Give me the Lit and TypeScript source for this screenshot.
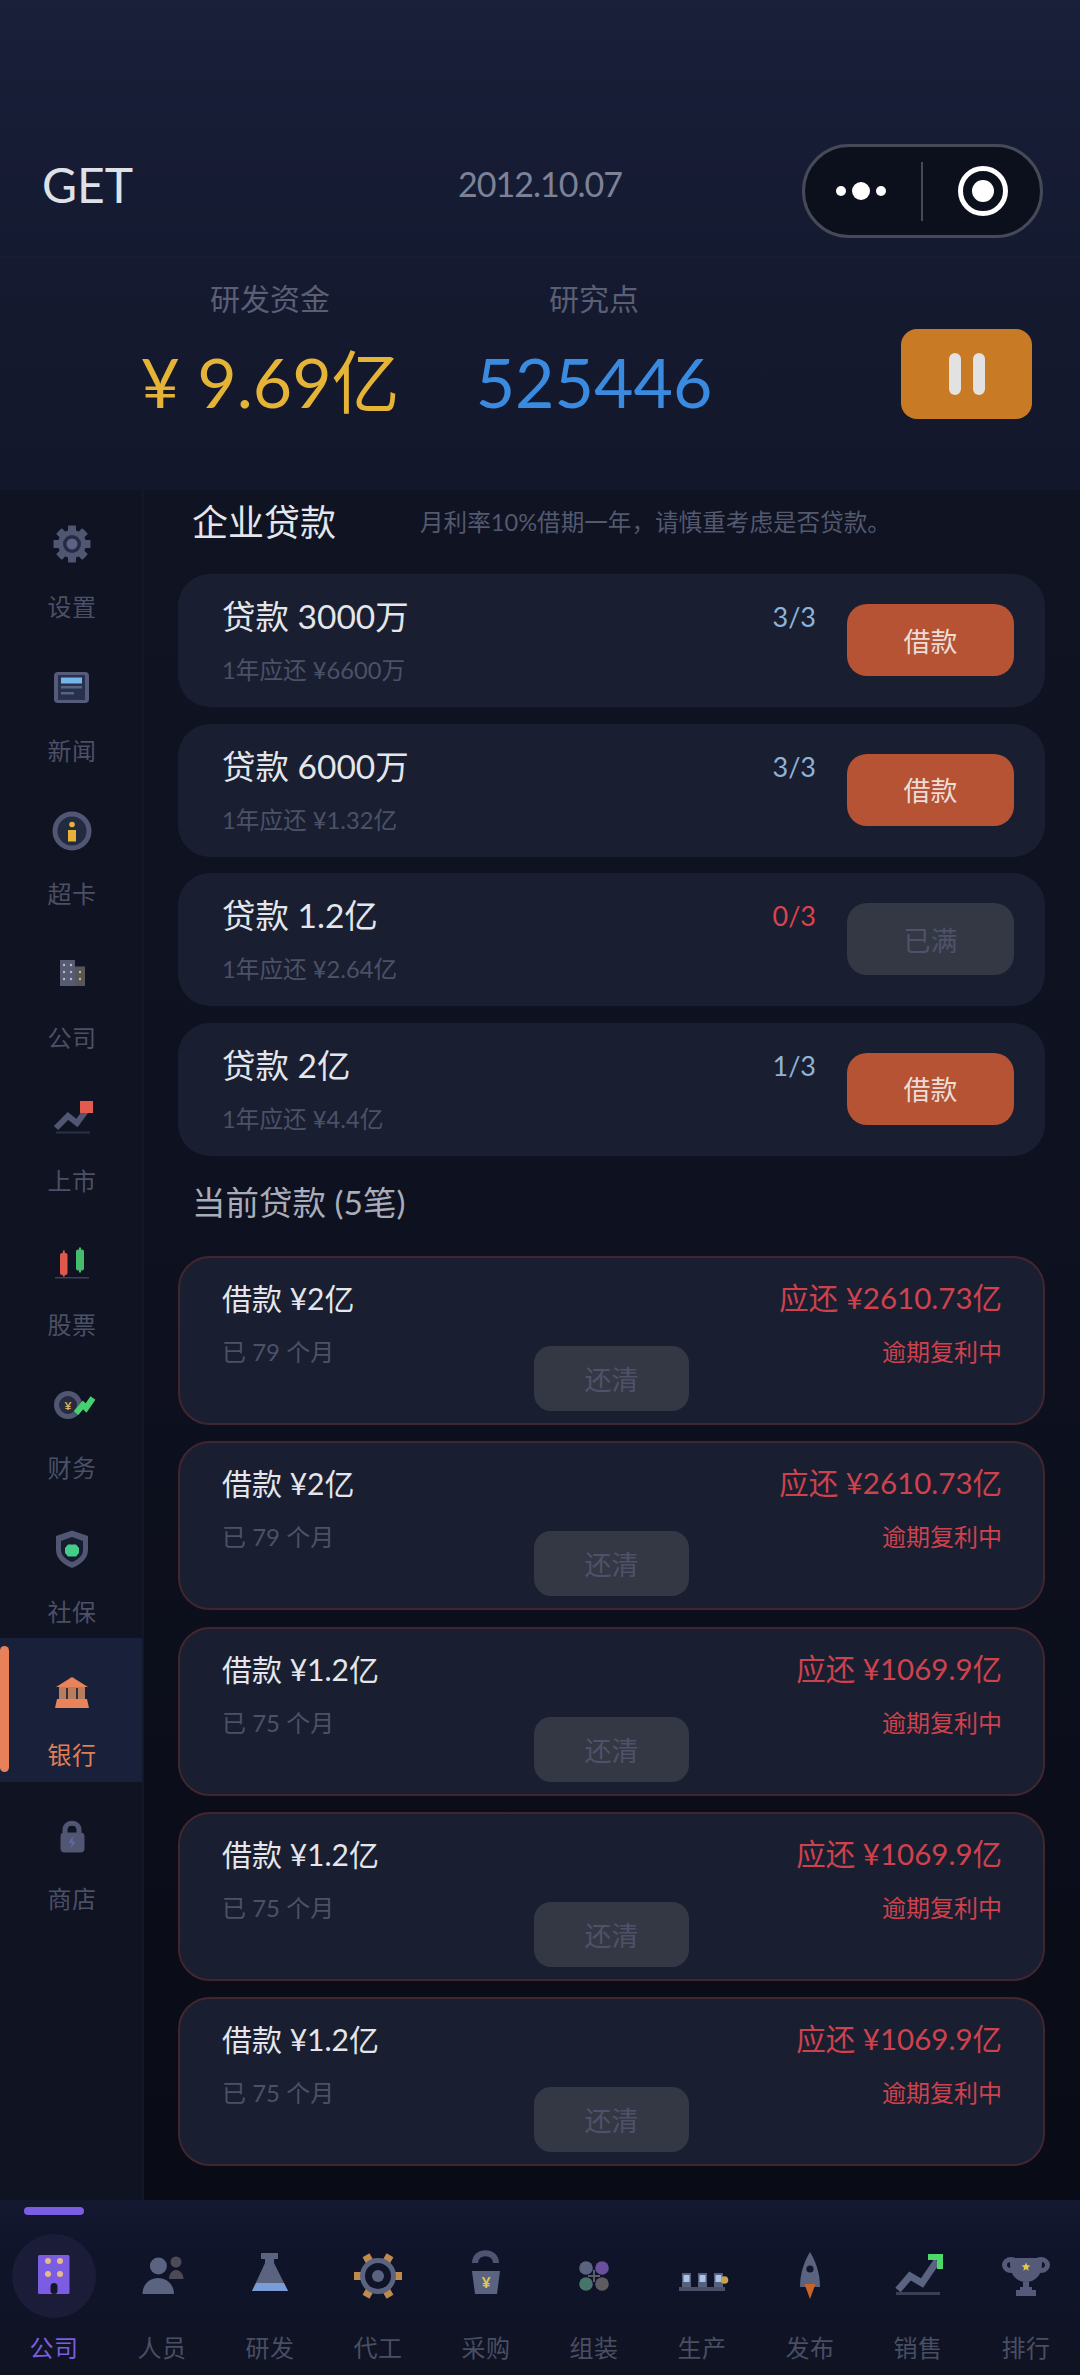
import { LitElement, html, css, svg } from "lit";
import { customElement } from "lit/decorators.js";

const S = "#545a78";
const S2 = "#5a6480";

const sideIcons: Record<string, unknown> = {
  gear: svg`<g fill="#515672">${[0, 45, 90, 135, 180, 225, 270, 315].map(
    (a) => svg`<rect x="20" y="5.5" width="8" height="9" rx="1" transform="rotate(${a} 24 24)"/>`
  )}<circle cx="24" cy="24" r="14"/></g><circle cx="24" cy="24" r="9" fill="#262b42"/><circle cx="24" cy="24" r="5.5" fill="#5c6187"/>`,
  news: svg`<rect x="6" y="8" width="35" height="31" rx="4" fill="#555b79"/><rect x="10" y="11" width="27" height="25" fill="#27314c"/><rect x="13" y="13.5" width="21" height="6" fill="#74b6ea"/><rect x="13" y="22" width="21" height="2.5" fill="#59627e"/><rect x="13" y="28" width="13" height="2.5" fill="#59627e"/>`,
  info: svg`<circle cx="24" cy="24" r="17" fill="#222a40" stroke="#515672" stroke-width="5"/><circle cx="24" cy="17.5" r="2.8" fill="#e8b23a"/><rect x="20" y="23" width="8" height="11.5" fill="#e8b23a"/>`,
  company: svg`<rect x="12" y="9" width="15" height="26" fill="#565b72"/><rect x="27" y="15.5" width="10" height="19.5" fill="#57575a"/>${[14, 21, 28].map(
    (y) => svg`<circle cx="16" cy=${y} r="1.2" fill="#b5b8c6"/><circle cx="23" cy=${y} r="1.2" fill="#b5b8c6"/>`
  )}${[21, 28].map((y) => svg`<circle cx="32" cy=${y} r="1.2" fill="#d2b27c"/>`)}`,
  ipo: svg`<polyline points="8,34 20,22 29,29 40,14" fill="none" stroke="#515672" stroke-width="6"/><rect x="8" y="37.5" width="34" height="2" fill="#2c3044"/><rect x="32" y="7" width="13" height="12" fill="#e25b4e"/>`,
  stock: svg`<rect x="12" y="15" width="7.5" height="22" rx="2" fill="#e0584c"/><rect x="14.8" y="12.5" width="2" height="26" fill="#e0584c"/><rect x="28" y="11.5" width="8" height="21" rx="2" fill="#45bd6c"/><rect x="31" y="9.5" width="2" height="25" fill="#45bd6c"/><rect x="7" y="39" width="34" height="1.5" fill="#3c4158"/>`,
  fin: svg`<circle cx="20" cy="24" r="11.5" fill="#262b3f" stroke="#515672" stroke-width="5"/><text x="20" y="28.5" font-size="12" text-anchor="middle" fill="#d8b060" font-family="Lato" font-weight="700">¥</text><polyline points="28,32 35,24 38,27 45,17" fill="none" stroke="#48d070" stroke-width="6"/>`,
  shield: svg`<path d="M24 5.5 L40 11 V25 C40 34 32 40 24 43 C16 40 8 34 8 25 V11Z" fill="#515672"/><path d="M24 12 L35 16 V25 C35 31 29 35 24 37 C19 35 13 31 13 25 V16Z" fill="#171c30"/><path d="M20 19.5 H28 L31 23 V28 L28 31.5 H20 L17 28 V23Z" fill="#44cc88"/>`,
  bank: svg`<path d="M24 9 L40 19 H8Z" fill="#e8835a"/><rect x="11" y="19" width="26" height="13" fill="#b87c5e"/><rect x="18" y="20" width="2" height="11" fill="#3b2d33"/><rect x="28" y="20" width="2" height="11" fill="#3b2d33"/><path d="M9 31 H39 L41 40 H7Z" fill="#e8835a"/>`,
  shop: svg`<path d="M17 23 V18 C17 9 31 9 31 18 V23" fill="none" stroke="#515672" stroke-width="5"/><rect x="12.5" y="20.5" width="24" height="20" rx="4" fill="#515672"/><path d="M25 24 L20.5 31 H24 L22.5 36.5 L28 29.5 H24.5Z" fill="#6068a8"/>`,
};

const star = (cx: number, cy: number, r: number) => {
  const p: string[] = [];
  for (let i = 0; i < 10; i++) {
    const rr = i % 2 ? r * 0.45 : r;
    const a = (Math.PI / 5) * i - Math.PI / 2;
    p.push(`${cx + rr * Math.cos(a)},${cy + rr * Math.sin(a)}`);
  }
  return p.join(" ");
};

const tabIcons: unknown[] = [
  svg`<rect x="16" y="11" width="31.5" height="39" rx="1.5" fill="#7a5de0"/>${[17, 30].map(
    (y) => svg`<circle cx="26" cy=${y} r="3" fill="#e8b98a"/><circle cx="38" cy=${y} r="3" fill="#e8b98a"/>`
  )}<rect x="28.5" y="39" width="7" height="11" rx="3.5" fill="#14162a"/>`,
  svg`<circle cx="46" cy="18" r="5.5" fill="#4b4a55"/><path d="M39 35 C39 29 43 26 46 26 C50 26 53.5 30 53.5 35Z" fill="#4b4a55"/><circle cx="28.4" cy="22" r="8.5" fill="${S2}"/><path d="M12.5 50 C12.5 40 20 34 28 34 C36 34 44 40 44 50Z" fill="${S2}"/>`,
  svg`<rect x="23" y="9" width="17" height="6" fill="${S2}"/><path d="M27 15 H36 V19 L50 47 H14 L27 19Z" fill="${S2}"/><path d="M18 39 H46 L50 47 H14Z" fill="#7a9cd6"/>`,
  svg`${[0, 60, 120, 180, 240, 300].map(
    (a) => svg`<rect x="48" y="28" width="8" height="8" fill="#c08a4c" transform="rotate(${a} 32 32)"/>`
  )}<circle cx="32" cy="32" r="15.5" fill="none" stroke="${S2}" stroke-width="5"/><circle cx="32" cy="32" r="6" fill="${S2}"/>`,
  svg`<path d="M21 19 C21 6 42 6 42 19" fill="none" stroke="#4f5470" stroke-width="6"/><path d="M18 27 H46 L43 50 H21Z" fill="${S2}"/><text x="32" y="44" font-size="15" text-anchor="middle" fill="#e8c84a" font-family="Lato" font-weight="700">¥</text>`,
  svg`<circle cx="24" cy="24" r="6.8" fill="${S2}"/><circle cx="40" cy="24" r="6.8" fill="#6a4f9c"/><circle cx="24" cy="40" r="6.8" fill="#47756a"/><circle cx="40" cy="40" r="6.8" fill="#5e5c60"/><path d="M32 26 V38 M26 32 H38" stroke="#5b5d6a" stroke-width="2"/>`,
  svg`<rect x="9" y="43" width="46" height="4" fill="#4a5068"/>${[12, 28, 44].map(
    (x) => svg`<rect x=${x} y="29" width="9" height="14" fill="#55607c"/><rect x=${x + 1.5} y="31" width="6" height="7" fill="#a9c4e6"/>`
  )}<circle cx="54.5" cy="36" r="3.8" fill="#c9a24e"/>`,
  svg`<path d="M32 8 C37 16 42 28 42 43 H22 C22 28 27 16 32 8Z" fill="${S2}"/><circle cx="32" cy="25" r="3.6" fill="#14162a"/><path d="M26.5 40 H37.5 L32 55Z" fill="#c8642a"/>`,
  svg`<rect x="10" y="48" width="44" height="3" fill="#3a3f55"/><polyline points="12,46 24,32 36,39 51,17" fill="none" stroke="${S2}" stroke-width="7"/><polygon points="42,10 57,10 57,25 51,25 51,16 42,16" fill="#4dd86a"/><polygon points="44,12 55,12 55,24 50,15" fill="#4dd86a"/>`,
  svg`<ellipse cx="17" cy="21" rx="6.5" ry="5.5" fill="none" stroke="${S}" stroke-width="5"/><ellipse cx="47" cy="21" rx="6.5" ry="5.5" fill="none" stroke="${S}" stroke-width="5"/><path d="M16 14 H48 V20 C48 32 40 38 32 38 C24 38 16 32 16 20Z" fill="${S}"/><rect x="29" y="38" width="6" height="6" fill="${S}"/><rect x="26" y="43" width="12" height="4" fill="${S}"/><rect x="22" y="46" width="20" height="6" fill="${S}"/><polygon points="${star(32, 23, 4.5)}" fill="#e8c84a"/>`,
];

const side: [string, string][] = [
  ["gear", "设置"], ["news", "新闻"], ["info", "超卡"], ["company", "公司"], ["ipo", "上市"],
  ["stock", "股票"], ["fin", "财务"], ["shield", "社保"], ["bank", "银行"], ["shop", "商店"],
];
const tabs = ["公司", "人员", "研发", "代工", "采购", "组装", "生产", "发布", "销售", "排行"];

const offers = [
  { t: "贷款 3000万", s: "1年应还 ¥6600万", c: "3/3", full: false },
  { t: "贷款 6000万", s: "1年应还 ¥1.32亿", c: "3/3", full: false },
  { t: "贷款 1.2亿", s: "1年应还 ¥2.64亿", c: "0/3", full: true },
  { t: "贷款 2亿", s: "1年应还 ¥4.4亿", c: "1/3", full: false },
];
const loans = [
  { t: "借款 ¥2亿", r: "应还 ¥2610.73亿", m: "已 79 个月" },
  { t: "借款 ¥2亿", r: "应还 ¥2610.73亿", m: "已 79 个月" },
  { t: "借款 ¥1.2亿", r: "应还 ¥1069.9亿", m: "已 75 个月" },
  { t: "借款 ¥1.2亿", r: "应还 ¥1069.9亿", m: "已 75 个月" },
  { t: "借款 ¥1.2亿", r: "应还 ¥1069.9亿", m: "已 75 个月" },
];

@customElement("app-root")
export class AppRoot extends LitElement {
  static styles = css`
    :host {
      display: block;
      width: 1080px;
      height: 2375px;
      overflow: hidden;
      font-family: "Lato", "Noto Sans CJK SC", sans-serif;
      background: #0f1322;
    }
    * { box-sizing: border-box; }
    .page { display: flex; flex-direction: column; height: 2375px; position: relative; }

    .head {
      height: 258px;
      flex: none;
      padding: 144px 37px 0 42px;
      display: grid;
      grid-template-columns: 1fr 241px;
      background: linear-gradient(#1a1f3a, #141a30);
      border-bottom: 2px solid #181d33;
      position: relative;
    }
    .get { font-size: 48px; line-height: 94px; color: #dfe1e8; height: 82px; margin-top: -6px; }
    .date {
      position: absolute; left: 0; right: 0; top: 162px; text-align: center;
      font-size: 34px; line-height: 44px; color: #7d8296; letter-spacing: -1px;
    }
    .pill {
      height: 94px; border: 3px solid #464a58; border-radius: 47px; background: #0c0f1c;
      display: flex; align-items: center; position: relative;
    }
    .pill svg { display: block; }

    .stats {
      height: 232px; flex: none; display: flex; position: relative;
      background: linear-gradient(#151a30, #12172b);
      padding-top: 22px;
    }
    .stat { display: flex; flex-direction: column; align-items: center; position: absolute; top: 22px; transform: translateX(-50%); white-space: nowrap; }
    .stat.a { left: 270px; }
    .stat.b { left: 594px; }
    .stat .l { font-size: 30px; line-height: 36px; color: #5a5f75; }
    .stat .v { font-size: 68px; line-height: 80px; margin-top: 26px; }
    .stat.a .v { color: #e5b336; }
    .stat.b .v { color: #3a8be0; }
    .pause {
      position: absolute; left: 901px; top: 71px; width: 131px; height: 90px;
      border-radius: 16px; background: #c97a24;
      display: flex; align-items: center; justify-content: center; gap: 12px;
    }
    .pause i { width: 12px; height: 42px; border-radius: 6px; background: #e2e2e2; display: block; }

    .body { flex: 1; display: flex; min-height: 0; }
    .sidebar { width: 144px; flex: none; background: #0f1322; border-right: 2px solid #12172a; padding: 0; }
    .si {
      height: 143.5px; display: flex; flex-direction: column; align-items: center;
      padding: 30px 0 0 2px; position: relative; color: #4c5066; font-size: 24px;
    }
    .si svg { display: block; width: 48px; height: 48px; flex: none; }
    .si span { line-height: 30px; margin-top: 24px; letter-spacing: 0.5px; }
    .si.on { background: #18203a; color: #e07f55; }
    .si.on::before {
      content: ""; position: absolute; left: 0; top: 8px; width: 9px; height: 126px;
      border-radius: 5px; background: #e8805a;
    }

    .main {
      flex: 1; padding: 0 35px 0 34px;
      background: linear-gradient(#0f1322, #0e1120 40%, #090b16);
      display: flex; flex-direction: column;
    }
    .top { display: flex; align-items: center; height: 84px; padding: 0 0 20px 14px; flex: none; }
    .top h2 { margin: 0; font-weight: 400; font-size: 36px; line-height: 52px; color: #e4e6ec; width: 228px; }
    .top p { margin: 0; font-size: 23.6px; line-height: 36px; color: #54596f; white-space: nowrap; }
    .offers { display: flex; flex-direction: column; gap: 16.5px; }
    .offer {
      height: 133px; border-radius: 32px; background: #191f30; display: flex; position: relative;
      padding: 21px 31px 0 44px;
    }
    .offer .txt { flex: 1; }
    .t { font-size: 33.5px; line-height: 42px; color: #e4e6ec; white-space: nowrap; }
    .s { font-size: 23.7px; line-height: 36px; color: #4c5168; margin-top: 15px; white-space: nowrap; }
    .c { font-size: 27px; line-height: 36px; color: #8eb3d9; margin: 4px 31px 0 0; }
    .c.red { color: #d8434e; }
    .btn {
      width: 167px; height: 72px; margin-top: 9px; border-radius: 20px; background: #b55334;
      color: #ecdcd4; font-size: 27px; display: flex; align-items: center; justify-content: center;
    }
    .btn.off { background: #343845; color: #4e5268; }
    .sub {
      margin: 0; font-weight: 400; font-size: 33.5px; line-height: 44px; color: #a9acb9;
      padding-left: 14px; margin-top: 24px; height: 76.5px; flex: none;
    }
    .loans { display: flex; flex-direction: column; gap: 16.3px; }
    .loan {
      height: 169px; border-radius: 32px; background: #191f30; border: 2px solid #42262f;
      padding: 20px 41px 0 42px; display: grid; grid-template-columns: 1fr auto; grid-template-rows: 40px 42px auto;
      row-gap: 17px; position: relative;
    }
    .loan .t { font-size: 30px; line-height: 40px; }
    .loan .r { font-size: 29.5px; line-height: 40px; color: #cf424d; text-align: right; white-space: nowrap; }
    .loan .m { font-size: 24px; line-height: 34px; color: #4c5168; }
    .loan .o { font-size: 24px; line-height: 34px; color: #cf424d; text-align: right; }
    .pay {
      grid-column: 1 / -1; justify-self: center; width: 155px; height: 65px; border-radius: 17px;
      background: #343845; color: #4e5268; font-size: 27px; display: flex; align-items: center; justify-content: center;
      margin: -48px 0 0 -1px;
    }

    .tabs {
      height: 175px; flex: none; background: linear-gradient(#141830, #10142a 30%, #0f1322);
      display: grid; grid-template-columns: repeat(10, 108px); position: relative;
    }
    .bar { position: absolute; left: 24px; top: 7px; width: 60px; height: 8px; border-radius: 4px; background: #7a5de0; }
    .tab { display: flex; flex-direction: column; align-items: center; padding-top: 34px; color: #4a4e63; font-size: 24px; }
    .ic { width: 84px; height: 84px; border-radius: 50%; display: flex; align-items: center; justify-content: center; flex: none; }
    .ic svg { width: 64px; height: 64px; display: block; }
    .tab span { line-height: 30px; margin-top: 15px; letter-spacing: 0.5px; }
    .tab.on { color: #7a5de0; }
    .tab.on .ic { background: #1a1c38; }
  `;

  render() {
    return html`<div class="page">
      <header class="head">
        <div class="get">GET</div>
        <div class="date">2012.10.07</div>
        <div class="pill">
          <svg width="235" height="88" viewBox="0 0 235 88">
            <circle cx="36" cy="44" r="5" fill="#fff"/><circle cx="56" cy="44" r="9" fill="#fff"/><circle cx="76" cy="44" r="5" fill="#fff"/>
            <rect x="116" y="15" width="2" height="59" fill="#464a58"/>
            <circle cx="178" cy="44" r="22.5" fill="none" stroke="#fff" stroke-width="5"/><circle cx="178" cy="44" r="11" fill="#fff"/>
          </svg>
        </div>
      </header>
      <section class="stats">
        <div class="stat a"><div class="l">研发资金</div><div class="v">¥ 9.69亿</div></div>
        <div class="stat b"><div class="l">研究点</div><div class="v">525446</div></div>
        <div class="pause"><i></i><i></i></div>
      </section>
      <div class="body">
        <nav class="sidebar">
          ${side.map(
            ([k, l]) => html`<div class="si ${k === "bank" ? "on" : ""}">
              <svg viewBox="0 0 48 48">${sideIcons[k]}</svg><span>${l}</span>
            </div>`
          )}
        </nav>
        <main class="main">
          <div class="top"><h2>企业贷款</h2><p>月利率10%借期一年，请慎重考虑是否贷款。</p></div>
          <div class="offers">
            ${offers.map(
              (o) => html`<div class="offer">
                <div class="txt"><div class="t">${o.t}</div><div class="s">${o.s}</div></div>
                <div class="c ${o.full ? "red" : ""}">${o.c}</div>
                <div class="btn ${o.full ? "off" : ""}">${o.full ? "已满" : "借款"}</div>
              </div>`
            )}
          </div>
          <h3 class="sub">当前贷款 (5笔)</h3>
          <div class="loans">
            ${loans.map(
              (l) => html`<div class="loan">
                <div class="t">${l.t}</div><div class="r">${l.r}</div>
                <div class="m">${l.m}</div><div class="o">逾期复利中</div>
                <div class="pay">还清</div>
              </div>`
            )}
          </div>
        </main>
      </div>
      <footer class="tabs">
        <div class="bar"></div>
        ${tabs.map(
          (t, i) => html`<div class="tab ${i === 0 ? "on" : ""}">
            <div class="ic"><svg viewBox="0 0 64 64">${tabIcons[i]}</svg></div><span>${t}</span>
          </div>`
        )}
      </footer>
    </div>`;
  }
}
